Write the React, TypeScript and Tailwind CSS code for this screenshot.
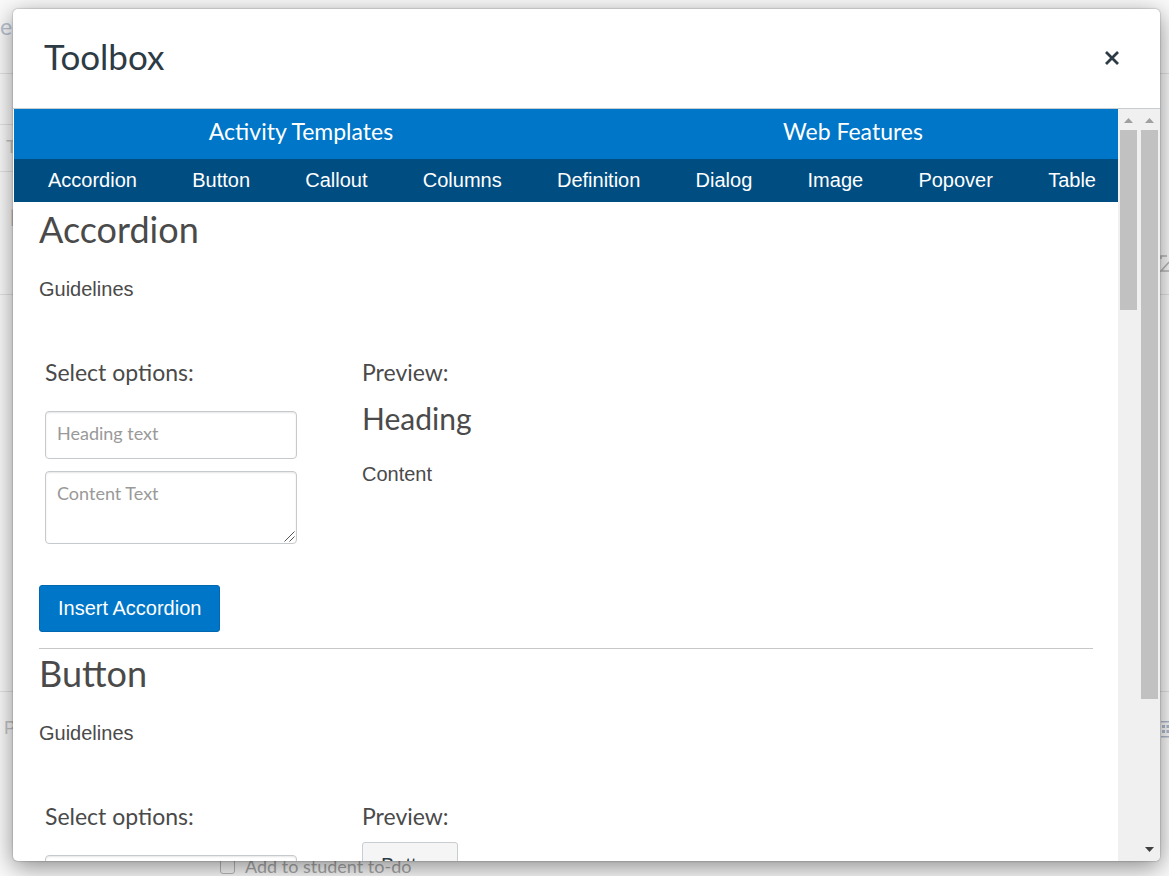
import type { ReactNode } from 'react';

const features = ['Accordion', 'Button', 'Callout', 'Columns', 'Definition', 'Dialog', 'Image', 'Popover', 'Table'];
const sans = "font-['Liberation_Sans',Arial,sans-serif]";
const fieldClass =
  'block w-full rounded-[4px] border border-[#c7cacd] bg-white px-[11px] text-[18px] leading-6 text-[#4a4a4a] shadow-[inset_0_1px_2px_rgba(0,0,0,0.1)] placeholder:text-[#999]';

function Backdrop() {
  return (
    <div className="absolute inset-0 flex flex-col overflow-hidden bg-[#fafafa] text-[18px] leading-6 text-[#c4c4c4]" aria-hidden="true">
      <div className="h-[74px] shrink-0 border-b border-[#e2e2e2] pt-[14px] text-[23px] text-[#b9c2d1]">e</div>
      <div className="h-[51px] w-1/2 shrink-0 border-b border-[#e2e2e2]" />
      <div className={`${sans} h-[47px] w-1/2 shrink-0 border-b border-[#e2e2e2] pl-[6px] pt-[10px]`}>T</div>
      <div className="flex h-[123px] shrink-0 justify-between border-b border-[#e2e2e2] pl-[10px]">
        <span className="pt-8">|</span>
        <svg className="mt-[82px] h-[20px] w-[9px]" viewBox="0 0 9 20" fill="none" stroke="#b5b5b5" strokeWidth="1.5">
          <path d="M1 5V2h6M9 8L1 17h8" />
        </svg>
      </div>
      <div className="h-[397px] shrink-0 border-b border-[#e2e2e2]" />
      <div className="flex h-[163px] shrink-0 justify-between pl-1 pt-6">
        <span className={sans}>P</span>
        <svg className="mt-[4px] h-[18px] w-[8px]" viewBox="0 0 8 18" fill="#aeb9cd">
          <path d="M0 1h8v1.500H0zM0 16h8v1.500H0zM1 5h3v3H1zM5.500 5h3v3h-3zM1 10h3v3H1zM5.500 10h3v3h-3z" />
        </svg>
      </div>
      <label className="flex items-center gap-[10px] pl-[220px] leading-[22px] text-[#a8a8a8]">
        <input type="checkbox" tabIndex={-1} className="h-[15px] w-[15px] appearance-none rounded-[3px] border border-[#b8b8b8]" />
        Add to student to-do
      </label>
    </div>
  );
}

function Arrow({ down = false }: { down?: boolean }) {
  return (
    <svg className="mx-auto h-[5px] w-[9px]" viewBox="0 0 9 5" fill={down ? '#404040' : '#a0a0a0'} aria-hidden="true">
      <path d={down ? 'M0 0h9L4.500 5z' : 'M0 5h9L4.500 0z'} />
    </svg>
  );
}

function Scrollbar({ thumb, end = false }: { thumb: string; end?: boolean }) {
  return (
    <div className="flex w-[21px] shrink-0 flex-col bg-[#f0f0f0] px-[2px] pb-[9px] pt-[9px]">
      <Arrow />
      <div className={`mt-[7px] w-[17px] shrink-0 bg-[#c1c1c1] ${thumb}`} />
      <div className="flex-1" />
      {end && <Arrow down />}
    </div>
  );
}

function Tool({ title, options, preview, children }: { title: string; options: ReactNode; preview: ReactNode; children?: ReactNode }) {
  return (
    <section>
      <h2 className="text-[36px] leading-[48px]">{title}</h2>
      <p className={`${sans} mt-[23px] text-[20px] leading-[26px]`}>Guidelines</p>
      <div className="mt-[55px] flex px-[6px]">
        <div className="w-[252px] shrink-0">
          <h3 className="text-[23px] leading-[30px]">Select options:</h3>
          {options}
        </div>
        <div className="ml-[65px]">
          <h3 className="text-[23px] leading-[30px]">Preview:</h3>
          {preview}
        </div>
      </div>
      {children}
    </section>
  );
}

export default function App() {
  return (
    <div className="relative flex h-screen flex-col overflow-hidden pb-[15px] pl-[13px] pr-[9px] pt-[9px] font-[Lato,sans-serif]">
      <Backdrop />
      <div
        role="dialog"
        aria-labelledby="dialog-title"
        className="relative flex min-h-0 flex-1 flex-col overflow-hidden rounded-[5px] bg-white shadow-[0_0_1px_1px_rgba(0,0,0,0.12),0_6px_24px_rgba(0,0,0,0.45)]"
      >
        <header className="flex h-[100px] shrink-0 items-center justify-between border-b border-[#c7cdd1] pb-[2px] pl-[31px] pr-[40px] text-[#2d3b45]">
          <h1 id="dialog-title" className="pb-1 text-[35px] leading-[44px]">Toolbox</h1>
          <button type="button" aria-label="Close" className="flex h-4 w-4 items-center justify-center">
            <svg className="h-[14px] w-[14px]" viewBox="0 0 14 14" fill="none" stroke="currentColor" strokeWidth="2.800">
              <path d="M1 1l12 12M13 1L1 13" />
            </svg>
          </button>
        </header>
        <div className="flex min-h-0 flex-1 pl-px">
          <main className="min-w-0 flex-1 overflow-hidden text-[#4a4a4a]">
            <nav aria-label="Toolbox sections" className="grid h-[50px] grid-cols-2 bg-[#0076c8] text-center text-[23px] leading-[44px] text-white">
              <a href="#activity-templates" className="pl-[22px]">Activity Templates</a>
              <a href="#web-features" className="pl-[22px]">Web Features</a>
            </nav>
            <nav aria-label="Web features" className={`${sans} flex h-[43px] items-center justify-between bg-[#004d81] pb-[2px] pl-[34px] pr-[22px] text-[20px] text-white`}>
              {features.map((name) => (
                <a key={name} href={`#${name.toLowerCase()}`}>{name}</a>
              ))}
            </nav>
            <div className="px-[25px] pt-[3px]">
              <Tool
                title="Accordion"
                options={
                  <>
                    <input aria-label="Heading text" placeholder="Heading text" className={`${fieldClass} mt-[24px] h-[48px] pb-[4px]`} />
                    <div className="relative mt-[12px]">
                      <textarea aria-label="Content text" placeholder="Content Text" className={`${fieldClass} h-[73px] resize-none py-[9px]`} />
                      <svg className="pointer-events-none absolute bottom-[2px] right-[2px] h-[11px] w-[11px]" viewBox="0 0 11 11" stroke="#555" strokeWidth="1" aria-hidden="true">
                        <path d="M0.500 10.500l10-10M5.500 10.500l5-5" />
                      </svg>
                    </div>
                  </>
                }
                preview={
                  <>
                    <h4 className="mt-[11px] text-[30px] leading-[40px]">Heading</h4>
                    <p className={`${sans} mt-[23px] text-[20px] leading-[26px]`}>Content</p>
                  </>
                }
              >
                <button type="button" className={`${sans} mt-[41px] block h-[47px] rounded-[3px] border border-[#0067b0] bg-[#0076c8] px-[18px] pb-[2px] text-[20px] text-white`}>
                  Insert Accordion
                </button>
                <hr className="mt-[16px] border-[#c7c7c7]" />
              </Tool>
              <Tool
                title="Button"
                options={<input aria-label="Button text" className={`${fieldClass} mt-[24px] h-[48px]`} />}
                preview={
                  <button type="button" className={`${sans} mt-[11px] block h-[47px] rounded-[3px] border border-[#c7cdd1] bg-[#f5f5f5] px-[18px] pb-[2px] text-[20px] text-[#2d3b45]`}>
                    Button
                  </button>
                }
              />
            </div>
          </main>
          <Scrollbar thumb="h-[180px]" />
          <Scrollbar thumb="h-[569px]" end />
        </div>
      </div>
    </div>
  );
}
